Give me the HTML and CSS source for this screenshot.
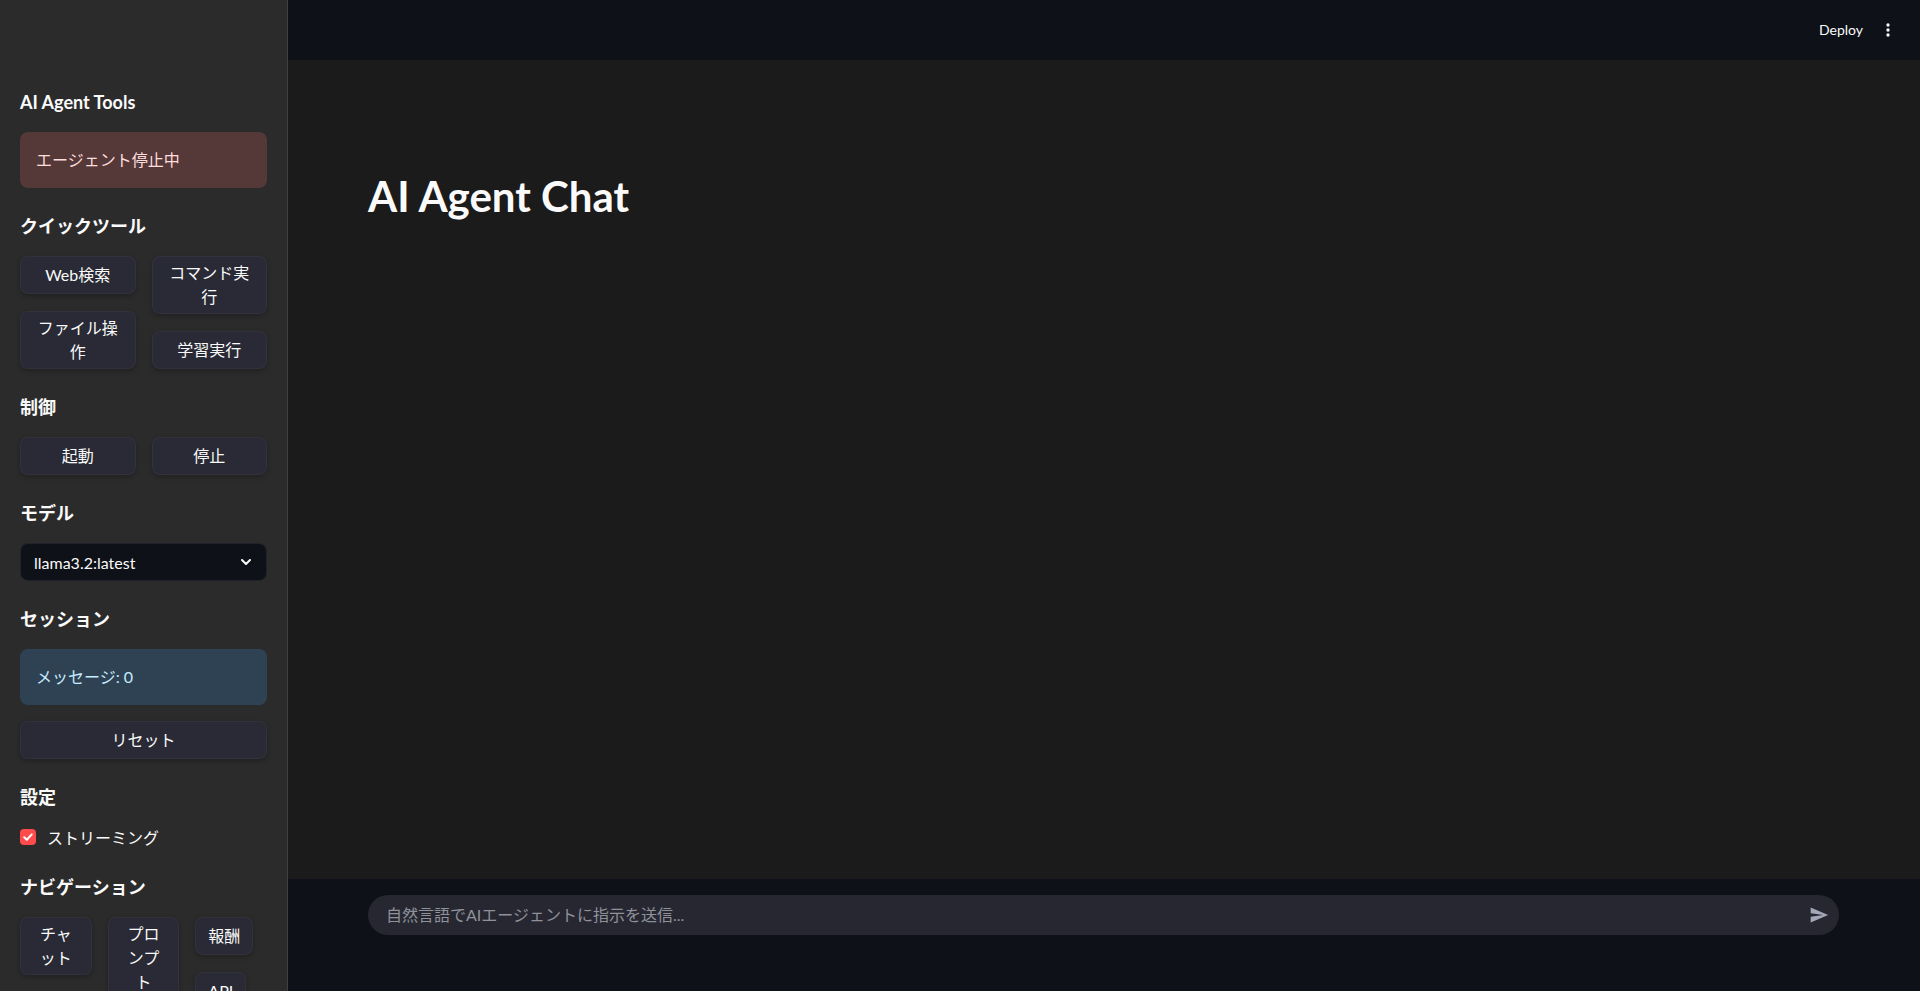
FILE: index.html
```html
<!DOCTYPE html>
<html lang="ja">
<head>
<meta charset="utf-8">
<title>AI Agent Chat</title>
<link rel="stylesheet" href="styles.css">
</head>
<body>
<div class="app">
  <aside class="sidebar">
    <h3 class="sb-h">AI Agent Tools</h3>
    <div class="alert alert-error">エージェント停止中</div>

    <h3 class="sb-h">クイックツール</h3>
    <div class="cols cols-2">
      <div class="col">
        <button class="btn full">Web検索</button>
        <button class="btn full">ファイル操作</button>
      </div>
      <div class="col">
        <button class="btn full">コマンド実行</button>
        <button class="btn full">学習実行</button>
      </div>
    </div>

    <h3 class="sb-h">制御</h3>
    <div class="cols cols-2">
      <div class="col"><button class="btn full">起動</button></div>
      <div class="col"><button class="btn full">停止</button></div>
    </div>

    <h3 class="sb-h">モデル</h3>
    <div class="select">
      <span>llama3.2:latest</span>
      <svg class="chev" width="10" height="6" viewBox="0 0 10 6"><path d="M1 1 L5 5 L9 1" fill="none" stroke="#fafafa" stroke-width="2" stroke-linecap="round" stroke-linejoin="round"/></svg>
    </div>

    <h3 class="sb-h">セッション</h3>
    <div class="alert alert-info">メッセージ: 0</div>
    <button class="btn full">リセット</button>

    <h3 class="sb-h">設定</h3>
    <label class="check">
      <span class="box"><svg width="12" height="12" viewBox="0 0 12 12"><path d="M2.2 6.3 L4.8 8.8 L9.8 3.4" fill="none" stroke="#fff" stroke-width="2" stroke-linecap="round" stroke-linejoin="round"/></svg></span>
      <span>ストリーミング</span>
    </label>

    <h3 class="sb-h">ナビゲーション</h3>
    <div class="cols cols-3">
      <div class="col"><button class="btn">チャット</button></div>
      <div class="col"><button class="btn">プロンプト</button></div>
      <div class="col">
        <button class="btn">報酬</button>
        <button class="btn">API</button>
      </div>
    </div>
  </aside>

  <div class="main-col">
    <header class="topbar">
      <span class="deploy">Deploy</span>
      <svg class="more" width="20" height="20" viewBox="0 0 24 24"><circle cx="12" cy="6" r="2" fill="#fafafa"/><circle cx="12" cy="12" r="2" fill="#fafafa"/><circle cx="12" cy="18" r="2" fill="#fafafa"/></svg>
    </header>
    <main class="content">
      <h1 class="title">AI Agent Chat</h1>
    </main>
    <footer class="bottom">
      <div class="chat-input">
        <span class="ph">自然言語でAIエージェントに指示を送信...</span>
        <svg class="send" width="20" height="20" viewBox="0 0 24 24"><path d="M2.01 21L23 12 2.01 3 2 10l15 2-15 2z" fill="#a3a8b8"/></svg>
      </div>
    </footer>
  </div>
</div>
</body>
</html>
```

FILE: styles.css
```css
* { box-sizing: border-box; }

html, body {
  margin: 0;
  padding: 0;
  height: 100%;
  overflow: hidden;
  background: #1b1b1b;
  color: #fafafa;
  font-family: Lato, "Noto Sans CJK JP", sans-serif;
  font-size: 16px;
}

.app {
  display: flex;
  height: 100vh;
}

/* Sidebar */
.sidebar {
  width: 288px;
  flex: none;
  height: 100vh;
  overflow: hidden;
  background: #2b2b2b;
  border-right: 1px solid rgba(250, 250, 250, 0.1);
  padding: 80px 20px 0 20px;
  display: flex;
  flex-direction: column;
  gap: 16px;
}

.sidebar > * {
  flex-shrink: 0;
}

.sb-h {
  margin: 12px 0 2px 0;
  height: 22px;
  font-size: 18px;
  line-height: 21px;
  font-weight: 700;
  color: #fafafa;
  white-space: nowrap;
}

.alert {
  height: 56px;
  border-radius: 8px;
  padding: 0 16px;
  display: flex;
  align-items: center;
  font-size: 16px;
  line-height: 24px;
}

.alert-error {
  background: #553838;
  color: #ffdede;
}

.alert-info {
  background: #2f4253;
  color: #c7ebff;
}

.cols {
  display: grid;
  gap: 16px;
  align-items: start;
}

.cols-2 { grid-template-columns: 1fr 1fr; }
.cols-3 { grid-template-columns: 1fr 1fr 1fr; }

.col {
  display: flex;
  flex-direction: column;
  align-items: flex-start;
  gap: 17px;
  min-width: 0;
}

.btn {
  font-family: inherit;
  font-size: 16px;
  line-height: 24px;
  color: #fafafa;
  background: #292a35;
  border: 1px solid rgba(250, 250, 250, 0.04);
  border-radius: 8px;
  padding: 4px 12px;
  min-height: 38px;
  max-width: 100%;
  box-shadow: 0 2px 5px rgba(0, 0, 0, 0.25);
  text-align: center;
  cursor: pointer;
  flex-shrink: 0;
}

.btn.full {
  width: 100%;
}

.col .btn.full { align-self: stretch; }

.select {
  height: 38px;
  background: #0e1117;
  border: 1px solid rgba(250, 250, 250, 0.08);
  border-radius: 8px;
  display: flex;
  align-items: center;
  justify-content: space-between;
  padding: 0 15px 0 13px;
  font-size: 16px;
  color: #fafafa;
}

.check {
  display: flex;
  align-items: center;
  gap: 11px;
  height: 24px;
  margin-top: -2px;
  font-size: 16px;
  color: #fafafa;
}

.check .box {
  width: 16px;
  height: 16px;
  border-radius: 4px;
  background: #ff4b4b;
  display: flex;
  align-items: center;
  justify-content: center;
}

/* Main column */
.main-col {
  flex: 1;
  display: flex;
  flex-direction: column;
  min-width: 0;
}

.topbar {
  height: 60px;
  flex: none;
  background: #0e1117;
  display: flex;
  align-items: center;
  justify-content: flex-end;
  gap: 15px;
  padding-right: 22px;
}

.deploy {
  font-size: 14px;
  line-height: 20px;
  color: #fafafa;
}

.content {
  flex: 1;
  background: #1b1b1b;
  padding: 110px 80px 0 80px;
}

.title {
  margin: 0;
  font-size: 42px;
  line-height: 53px;
  font-weight: 700;
  color: #fafafa;
}

.bottom {
  height: 112px;
  flex: none;
  background: #0e1117;
  padding: 16px 81px 0 80px;
}

.chat-input {
  height: 40px;
  border-radius: 20px;
  background: #262730;
  display: flex;
  align-items: center;
  justify-content: space-between;
  padding: 0 10px 0 18px;
}

.ph {
  font-size: 16px;
  line-height: 22px;
  color: #8f919b;
}
```
